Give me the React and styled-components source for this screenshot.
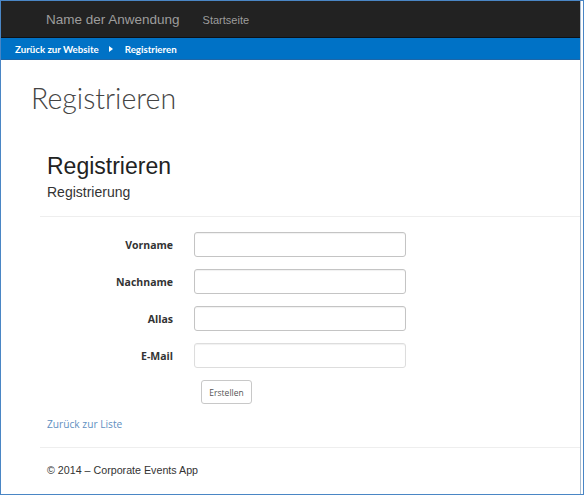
import React from 'react';
import styled, { createGlobalStyle } from 'styled-components';

const GlobalStyle = createGlobalStyle`
  html, body {
    margin: 0;
    padding: 0;
    background: #ffffff;
  }
  * {
    box-sizing: border-box;
  }
`;

const Frame = styled.div`
  width: 584px;
  height: 495px;
  border: 1px solid #4a86c5;
  overflow: hidden;
  display: flex;
`;

const Window = styled.div`
  flex: 1;
  margin-right: 2px;
  border-right: 1px solid #a9bccf;
  display: flex;
  flex-direction: column;
  background: #fff;
`;

const Navbar = styled.div`
  height: 37px;
  background: #222222;
  border-bottom: 1px solid #0d1117;
  display: flex;
  align-items: center;
  padding-left: 45px;
  gap: 23px;
`;

const Brand = styled.span`
  font-family: 'Liberation Sans', Arial, sans-serif;
  font-size: 13.5px;
  color: #9d9d9d;
  padding-top: 1px;
`;

const NavLink = styled.span`
  font-family: 'Liberation Sans', Arial, sans-serif;
  font-size: 11px;
  color: #9d9d9d;
  padding-top: 1px;
`;

const Crumbs = styled.div`
  height: 22px;
  background: #0072c6;
  border-bottom: 1px solid #1d66a8;
  display: flex;
  align-items: center;
  padding-left: 14px;
  gap: 9px;
`;

const Crumb = styled.span`
  font-family: Lato, 'Open Sans', sans-serif;
  font-size: 9.7px;
  font-weight: 700;
  color: #ffffff;
`;

const Caret = styled.span`
  width: 0;
  height: 0;
  border-top: 3px solid transparent;
  border-bottom: 3px solid transparent;
  border-left: 4px solid #ffffff;
  margin: 0 3px 0 1px;
`;

const Main = styled.div`
  flex: 1;
  padding-top: 20px;
`;

const PageTitle = styled.h1`
  margin: 0 0 0 30px;
  font-family: Lato, 'Open Sans', sans-serif;
  font-weight: 300;
  font-size: 28.5px;
  line-height: 36px;
  color: #444;
`;

const Body = styled.div`
  margin-left: 39px;
  margin-top: 37px;
`;

const Heading = styled.h2`
  margin: 0;
  padding-left: 7px;
  font-family: 'Liberation Sans', Arial, sans-serif;
  font-weight: 400;
  font-size: 23px;
  line-height: 26px;
  color: #222;
`;

const SubHeading = styled.h4`
  margin: 4px 0 0;
  padding-left: 7px;
  font-family: 'Liberation Sans', Arial, sans-serif;
  font-weight: 400;
  font-size: 14px;
  line-height: 18px;
  color: #333;
`;

const Rule = styled.hr`
  margin: ${p => p.$top}px 0 0;
  border: 0;
  border-top: 1px solid #eeeeee;
`;

const FormGrid = styled.div`
  display: grid;
  grid-template-columns: 133px 212px;
  column-gap: 21px;
  row-gap: 12px;
  margin-top: 15px;
`;

const Label = styled.label`
  font-family: 'Open Sans', 'DejaVu Sans', sans-serif;
  font-size: 10.5px;
  font-weight: 700;
  color: #333;
  text-align: right;
  align-self: center;
`;

const Input = styled.input`
  height: 25px;
  width: 212px;
  border: 1px solid ${p => (p.$faint ? '#dddddd' : '#c4c4c4')};
  border-radius: 3px;
  box-shadow: inset 0 1px 1px rgba(0, 0, 0, 0.06);
  background: #fff;
  outline: none;
`;

const Button = styled.button`
  grid-column: 2;
  justify-self: start;
  margin-left: 7px;
  width: 51px;
  height: 24px;
  padding: 0;
  border: 1px solid #c8c8c8;
  border-radius: 3px;
  background: #fff;
  font-family: 'Open Sans', 'DejaVu Sans', sans-serif;
  font-size: 8.5px;
  color: #555;
`;

const BackLink = styled.a`
  display: block;
  margin-top: 13px;
  padding-left: 7px;
  font-family: 'Open Sans', 'DejaVu Sans', sans-serif;
  font-size: 10.2px;
  line-height: 14px;
  color: #5f8fbf;
  text-decoration: none;
`;

const Footer = styled.p`
  margin: 15px 0 0;
  padding-left: 7px;
  font-family: 'Liberation Sans', Arial, sans-serif;
  font-size: 10.7px;
  line-height: 14px;
  color: #333;
`;

const fields = [
  { label: 'Vorname' },
  { label: 'Nachname' },
  { label: 'Allas' },
  { label: 'E-Mail', faint: true },
];

export default function App() {
  return (
    <>
      <GlobalStyle />
      <Frame>
        <Window>
          <Navbar>
            <Brand>Name der Anwendung</Brand>
            <NavLink>Startseite</NavLink>
          </Navbar>
          <Crumbs>
            <Crumb>Zurück zur Website</Crumb>
            <Caret />
            <Crumb>Registrieren</Crumb>
          </Crumbs>
          <Main>
            <PageTitle>Registrieren</PageTitle>
            <Body>
              <Heading>Registrieren</Heading>
              <SubHeading>Registrierung</SubHeading>
              <Rule $top={15} />
              <FormGrid>
                {fields.map(f => (
                  <React.Fragment key={f.label}>
                    <Label>{f.label}</Label>
                    <Input type="text" $faint={f.faint} />
                  </React.Fragment>
                ))}
                <Button>Erstellen</Button>
              </FormGrid>
              <BackLink href="#">Zurück zur Liste</BackLink>
              <Rule $top={16} />
              <Footer>© 2014 – Corporate Events App</Footer>
            </Body>
          </Main>
        </Window>
      </Frame>
    </>
  );
}
